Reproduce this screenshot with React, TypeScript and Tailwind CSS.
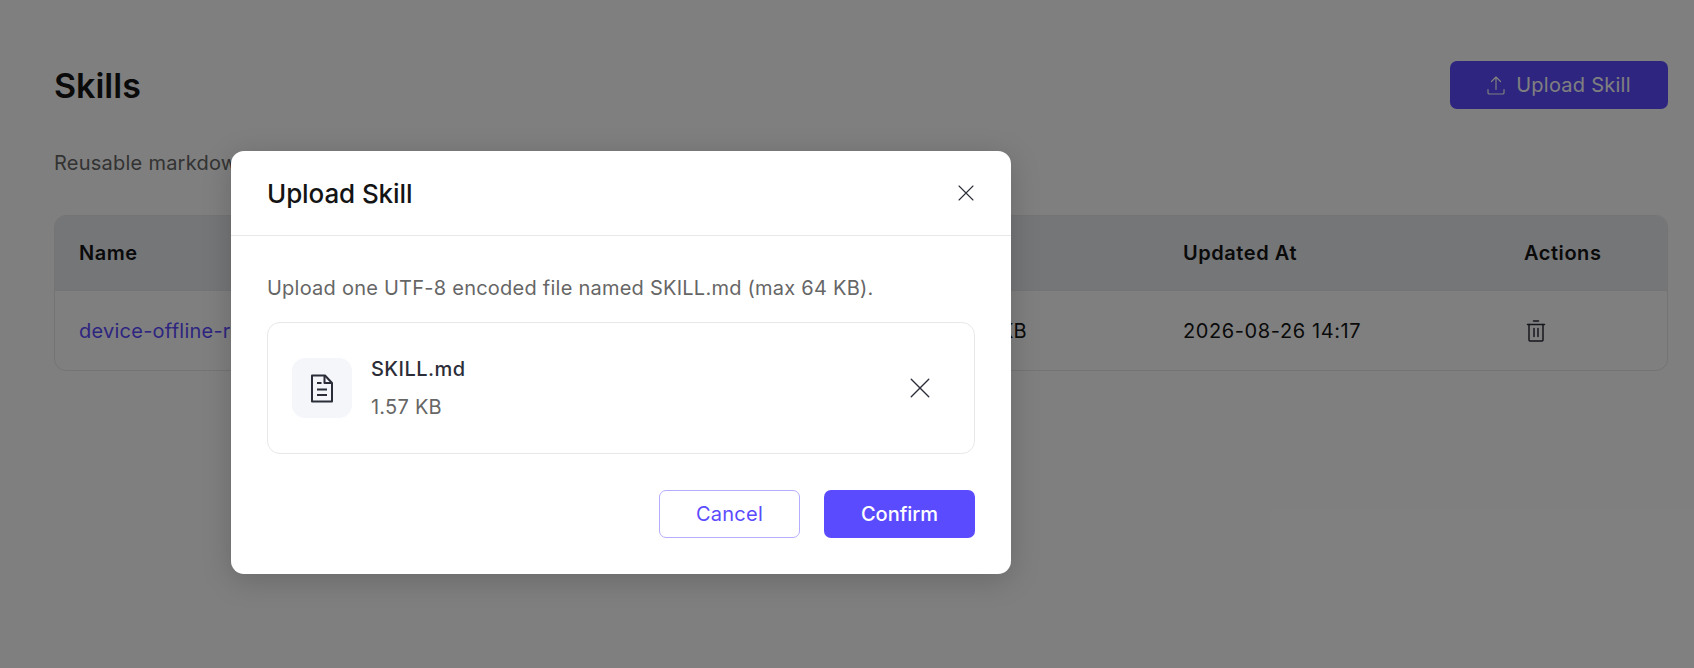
const font = { fontFamily: "Inter, 'Liberation Sans', sans-serif" };

function UploadIcon() {
  return (
    <svg width="18" height="19" viewBox="0 0 18 19" fill="none" stroke="currentColor" strokeWidth="1.2" strokeLinecap="round" strokeLinejoin="round">
      <path d="M9 13.5V1M4.5 5.5 9 1l4.5 4.5" />
      <path d="M1 13.5v3.2q0 1.3 1.3 1.3h13.4q1.3 0 1.3-1.3v-3.2" />
    </svg>
  );
}

function TrashIcon() {
  return (
    <svg width="20" height="22" viewBox="0 0 20 22" fill="none" stroke="currentColor" strokeWidth="1.5" strokeLinecap="round" strokeLinejoin="round">
      <path d="M7.5 1h5M1.5 4.5h17" />
      <path d="M3 4.5V20q0 1 1 1h12q1 0 1-1V4.5" />
      <path d="M8 8.5v8M12 8.5v8" />
    </svg>
  );
}

function FileIcon() {
  return (
    <svg width="24" height="29" viewBox="0 0 24 29" fill="none" stroke="#2b2d38" strokeWidth="2" strokeLinejoin="round">
      <path d="M2 1.5h13L22 9v18.5H2z" />
      <path d="M14.5 1.5V9H22" />
      <path d="M7 9h4.5M7 15.5h10M7 21h10" />
    </svg>
  );
}

function CloseIcon({ size }: { size: number }) {
  return (
    <svg width={size} height={size} viewBox="0 0 16 16" fill="none" stroke="currentColor" strokeWidth="1.1" strokeLinecap="round">
      <path d="M1 1l14 14M15 1 1 15" />
    </svg>
  );
}

export default function App() {
  return (
    <div className="relative h-[668px] w-[1694px] overflow-hidden bg-white text-[20px] tracking-[0.24px] text-[#141414]" style={font}>
      <div className="flex flex-col pl-[54px] pr-[26px] pt-[61px]">
        <div className="flex h-[48px] items-center justify-between">
          <h1 className="text-[34px] font-semibold tracking-normal">Skills</h1>
          <button className="flex h-[48px] w-[218px] items-center justify-center gap-[11px] rounded-[7px] bg-[#5b4bff] text-white">
            <UploadIcon />
            Upload Skill
          </button>
        </div>
        <p className="mt-[39px] leading-[30px] text-[#666666]">Reusable markdown skills</p>
        <div className="mt-[37px] overflow-hidden rounded-[12px] border border-[#e8e8e8]">
          <div className="grid h-[75px] grid-cols-[877px_227px_341px_1fr] items-center border-b border-[#e8e8e8] bg-[#eaecf0] pl-[24px] font-semibold tracking-[0.55px]">
            <span>Name</span>
            <span>Size</span>
            <span>Updated At</span>
            <span>Actions</span>
          </div>
          <div className="grid h-[79px] grid-cols-[877px_227px_341px_1fr] items-center pl-[24px]">
            <span className="text-[#5b4bff]">device-offline-runbook</span>
            <span>1.57 KB</span>
            <span className="tracking-[0.6px]">2026-08-26 14:17</span>
            <span className="pl-[2px] text-[#2b2d38]"><TrashIcon /></span>
          </div>
        </div>
      </div>

      <div className="absolute inset-0 bg-black/50" />

      <div className="absolute left-[231px] top-[151px] w-[780px] rounded-[13px] bg-white shadow-[0_6px_30px_rgba(0,0,0,0.18)]">
        <div className="flex h-[85px] items-center justify-between border-b border-[#e8e8e8] pl-[36px] pr-[37px]">
          <h2 className="text-[26px] font-medium tracking-[-0.1px]">Upload Skill</h2>
          <span className="text-[#2b2d38]"><CloseIcon size={16} /></span>
        </div>
        <div className="flex flex-col px-[36px] pb-[36px] pt-[37px]">
          <p className="leading-[30px] text-[#666666]">Upload one UTF-8 encoded file named SKILL.md (max 64 KB).</p>
          <div className="mt-[19px] flex h-[132px] items-center rounded-[13px] border border-[#e8e8e8] pl-[24px] pr-[44px]">
            <div className="flex h-[60px] w-[60px] items-center justify-center rounded-[13px] bg-[#f5f6fa]">
              <FileIcon />
            </div>
            <div className="ml-[19px] flex flex-1 flex-col gap-[8px]">
              <span className="font-medium leading-[30px] tracking-[0.45px] text-[#2b2d38]">SKILL.md</span>
              <span className="leading-[30px] text-[#666666]">1.57 KB</span>
            </div>
            <span className="text-[#2b2d38]"><CloseIcon size={20} /></span>
          </div>
          <div className="mt-[36px] flex justify-end gap-[24px]">
            <button className="h-[48px] w-[141px] rounded-[7px] border border-[#b5aeff] bg-white text-[#5b4bff]">Cancel</button>
            <button className="h-[48px] w-[151px] rounded-[7px] bg-[#5b4bff] font-medium tracking-normal text-white">Confirm</button>
          </div>
        </div>
      </div>
    </div>
  );
}
